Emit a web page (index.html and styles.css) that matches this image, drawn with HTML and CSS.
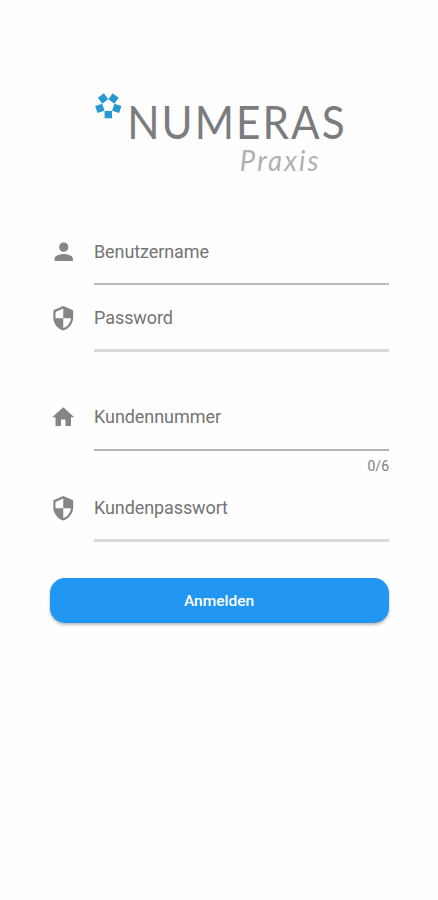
FILE: index.html
```html
<!DOCTYPE html>
<html lang="de">
<head>
<meta charset="utf-8">
<meta name="viewport" content="width=device-width">
<title>Numeras Praxis</title>
<link rel="stylesheet" href="styles.css">
</head>
<body>
<svg class="defs" width="0" height="0">
  <symbol id="shield" viewBox="0 0 24 24"><path d="M12 1 3.6 4.6Q3 4.9 3 5.6V11c0 5.55 3.84 10.74 9 12 5.16-1.26 9-6.45 9-12V5.6q0-.7-.6-1zm0 10.99h7c-.53 4.12-3.28 7.79-7 8.94V12H5V6.3l7-3.11v8.8z"/></symbol>
  <symbol id="person" viewBox="0 0 24 24"><path d="M12 12c2.21 0 4-1.79 4-4s-1.79-4-4-4-4 1.79-4 4 1.79 4 4 4zm0 2c-2.67 0-8 1.34-8 4v2h16v-2c0-2.66-5.33-4-8-4z"/></symbol>
  <symbol id="home" viewBox="0 0 24 24"><path d="M10 20v-6h4v6h5v-8h3L12 3 2 12h3v8z"/></symbol>
</svg>
<main class="login">
  <svg class="logo" viewBox="0 0 260 92" width="260" height="92">
    <g class="mark" transform="translate(18.3 15.7)">
      <rect id="tile" x="-3.7" y="5.2" width="7.4" height="7.4"/>
      <use href="#tile" transform="rotate(72)"/>
      <use href="#tile" transform="rotate(144)"/>
      <use href="#tile" transform="rotate(216)"/>
      <use href="#tile" transform="rotate(288)"/>
    </g>
    <text class="brand" transform="translate(37.2 49) scale(.92 1)" textLength="236.5" lengthAdjust="spacing">NUMERAS</text>
    <text class="product" transform="translate(149.8 80.5) scale(.96 1)" textLength="82" lengthAdjust="spacing">Praxis</text>
  </svg>
  <form class="form">
    <div class="field">
      <svg class="icon wide"><use href="#person"/></svg>
      <div class="input"><svg class="label" height="24"><text y="17" textLength="115">Benutzername</text></svg></div>
    </div>
    <div class="field secret">
      <svg class="icon"><use href="#shield"/></svg>
      <div class="input"><svg class="label" height="24"><text y="17" textLength="79">Password</text></svg></div>
    </div>
    <div class="field customer">
      <svg class="icon"><use href="#home"/></svg>
      <div class="input"><svg class="label" height="24"><text y="17" textLength="127">Kundennummer</text></svg></div>
    </div>
    <div class="counter">0/6</div>
    <div class="field secret">
      <svg class="icon"><use href="#shield"/></svg>
      <div class="input"><svg class="label" height="24"><text y="17" textLength="134">Kundenpasswort</text></svg></div>
    </div>
    <button class="submit" type="button">Anmelden</button>
  </form>
</main>
</body>
</html>
```
FILE: styles.css
```css
body {
  margin: 0;
  background: #fefefe;
  font-family: Roboto, sans-serif;
}

.defs {
  display: block;
}

.login {
  min-height: 900px;
  box-sizing: border-box;
  padding: 90px 49px 0 50px;
}

.logo {
  display: block;
  margin-left: 40px;
}

.mark {
  fill: #2a98d3;
}

.brand {
  font: 400 46px Lato, sans-serif;
  fill: #7b7c7e;
}

.product {
  font: italic 400 28.5px Lato, sans-serif;
  fill: #afb0b2;
}

.form {
  padding-top: 37px;
}

.field {
  display: flex;
  height: 66px;
}

.icon {
  width: 26.5px;
  height: 26.5px;
  margin: 19.5px 17.5px 0 0;
  flex: none;
  fill: #858585;
}

.icon.wide {
  width: 27.5px;
  height: 27.5px;
  margin: 19px 17px 0 -.5px;
}

.input {
  flex: 1;
  height: 66px;
  padding-top: 22px;
  box-sizing: border-box;
  border-bottom: 2px solid #bcbcbc;
}

.secret .input {
  height: 67px;
  border-bottom: 3px solid #d9d9d9;
}

.label {
  display: block;
  width: 100%;
  font-size: 18px;
  fill: #747474;
}

.customer {
  margin-top: 33px;
}

.customer .input {
  height: 67px;
  border-bottom-color: #b4b4b4;
}

.counter {
  height: 25px;
  font-size: 14px;
  line-height: 33px;
  text-align: right;
  color: #808080;
}

.submit {
  display: block;
  width: 100%;
  height: 44.5px;
  margin-top: 37px;
  padding: 2px 1px 0 0;
  border: 0;
  border-radius: 15px;
  background: #2196f3;
  box-shadow: 0 2px 3px rgba(0, 0, 0, .27);
  color: #fff;
  font: 500 15.5px Roboto, sans-serif;
}
```
